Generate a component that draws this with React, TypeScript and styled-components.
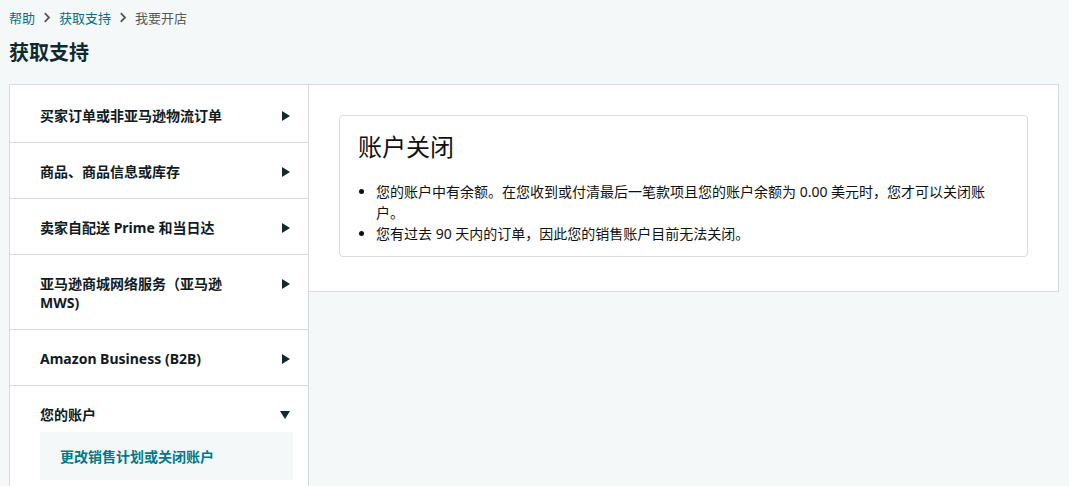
import styled, { createGlobalStyle } from "styled-components";

const GlobalStyle = createGlobalStyle`
  html, body {
    margin: 0;
    padding: 0;
    background: #f5f8f8;
    font-family: "Noto Sans", "Noto Sans CJK SC", sans-serif;
    color: #0f1111;
  }
`;

const Page = styled.div`
  padding: 0 10px 0 9px;
`;

const Crumbs = styled.div`
  display: flex;
  align-items: center;
  gap: 8px;
  height: 35px;
  font-size: 13px;
`;

const CrumbLink = styled.span<{ $current?: boolean }>`
  color: ${(p) => (p.$current ? "#565959" : "#007185")};
`;

const Title = styled.h1`
  margin: 0;
  height: 49px;
  line-height: 36px;
  font-size: 20px;
  font-weight: 700;
  color: #0f2a2f;
`;

const Layout = styled.div`
  display: flex;
  align-items: flex-start;
`;

const Nav = styled.div`
  width: 298px;
  flex-shrink: 0;
  background: #fff;
  border: 1px solid #d5dbdb;
  border-bottom: none;
  padding-top: 2px;
  min-height: 400px;
`;

const NavItem = styled.div`
  border-bottom: 1px solid #d5dbdb;
`;

const NavHead = styled.div<{ $open?: boolean }>`
  display: flex;
  align-items: flex-start;
  gap: 30px;
  padding: ${(p) => (p.$open ? "19px 18px 0 30px" : "19px 18px 17px 30px")};
`;

const NavText = styled.div`
  flex: 1;
  font-size: 14px;
  line-height: 19px;
  font-weight: 700;
  color: #0f1b1f;
`;

const Arrow = styled.svg<{ $down?: boolean }>`
  flex-shrink: 0;
  margin-top: ${(p) => (p.$down ? "6px" : "5px")};
`;

const SubBox = styled.div`
  margin: 8px 15px 0 30px;
  background: #f5f8f8;
  height: 48px;
  display: flex;
  align-items: center;
  padding-left: 20px;
  font-size: 14px;
  font-weight: 700;
  color: #00788a;
`;

const Panel = styled.div`
  flex: 1;
  background: #fff;
  border: 1px solid #d5dbdb;
  border-left: none;
  padding: 30px 30px 34px 30px;
`;

const Card = styled.div`
  border: 1px solid #d9dcdc;
  border-radius: 4px;
  padding: 15px 19px 12px 18px;
`;

const CardTitle = styled.h2`
  margin: 0;
  font-size: 24px;
  line-height: 32px;
  font-weight: 400;
  color: #0f1111;
`;

const List = styled.ul`
  margin: 18px 0 0 0;
  padding-left: 18px;
  font-size: 14px;
  line-height: 21px;
  color: #0f1111;
  padding-right: 10px;
`;

const Chevron = () => (
  <svg width="8" height="11" viewBox="0 0 8 11">
    <path d="M1.8 1.2 L6 5.5 L1.8 9.8" fill="none" stroke="#565959" strokeWidth="1.8" />
  </svg>
);

const RightTri = () => (
  <Arrow width="8" height="10" viewBox="0 0 8 10">
    <path d="M0 0 L8 5 L0 10 Z" fill="#0f2a2f" />
  </Arrow>
);

const DownTri = () => (
  <Arrow $down width="10" height="8" viewBox="0 0 10 8">
    <path d="M0 0 L10 0 L5 8 Z" fill="#0f2a2f" />
  </Arrow>
);

const items = [
  "买家订单或非亚马逊物流订单",
  "商品、商品信息或库存",
  "卖家自配送 Prime 和当日达",
  "亚马逊商城网络服务（亚马逊 MWS)",
  "Amazon Business (B2B)",
];

export default function App() {
  return (
    <>
      <GlobalStyle />
      <Page>
        <Crumbs>
          <CrumbLink>帮助</CrumbLink>
          <Chevron />
          <CrumbLink>获取支持</CrumbLink>
          <Chevron />
          <CrumbLink $current>我要开店</CrumbLink>
        </Crumbs>
        <Title>获取支持</Title>
        <Layout>
          <Nav>
            {items.map((t) => (
              <NavItem key={t}>
                <NavHead>
                  <NavText>{t}</NavText>
                  <RightTri />
                </NavHead>
              </NavItem>
            ))}
            <div>
              <NavHead $open>
                <NavText>您的账户</NavText>
                <DownTri />
              </NavHead>
              <SubBox>更改销售计划或关闭账户</SubBox>
            </div>
          </Nav>
          <Panel>
            <Card>
              <CardTitle>账户关闭</CardTitle>
              <List>
                <li>您的账户中有余额。在您收到或付清最后一笔款项且您的账户余额为 0.00 美元时，您才可以关闭账户。</li>
                <li>您有过去 90 天内的订单，因此您的销售账户目前无法关闭。</li>
              </List>
            </Card>
          </Panel>
        </Layout>
      </Page>
    </>
  );
}
